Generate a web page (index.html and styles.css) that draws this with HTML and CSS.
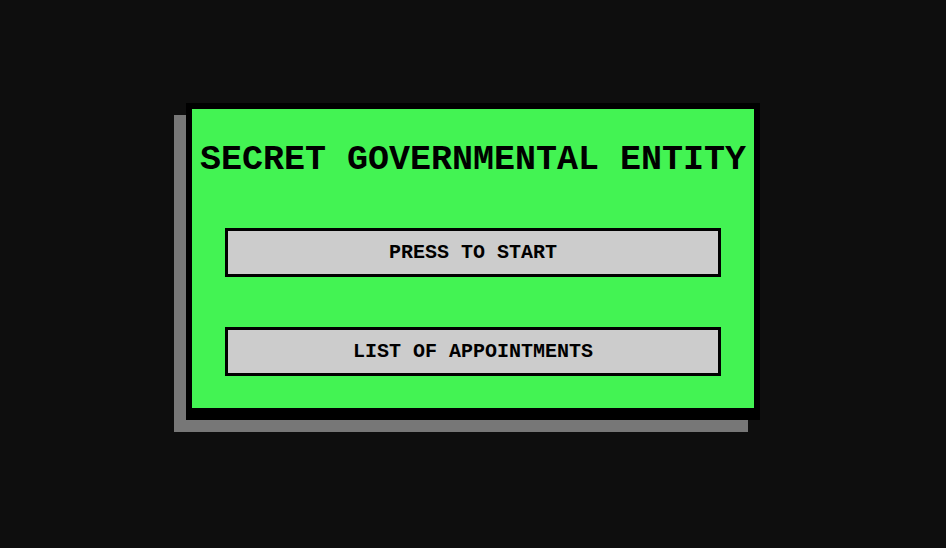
FILE: index.html
```html
<!DOCTYPE html>
<html>
<head>
<meta charset="utf-8">
<link rel="stylesheet" href="styles.css">
</head>
<body>
<main class="card">
  <h1 class="title">SECRET GOVERNMENTAL ENTITY</h1>
  <div class="actions">
    <button class="btn">PRESS TO START</button>
    <button class="btn">LIST OF APPOINTMENTS</button>
  </div>
</main>
</body>
</html>
```
FILE: styles.css
```css
html, body {
  margin: 0;
  padding: 0;
  background: #0e0e0e;
  height: 100%;
}
body {
  display: flex;
  justify-content: center;
  align-items: flex-start;
  padding-top: 103px;
  box-sizing: border-box;
  font-family: "Courier New", "Liberation Mono", monospace;
}
.card {
  width: 562px;
  height: 268px;
  background: #43f353;
  border: 6px solid #000;
  border-bottom-width: 12px;
  box-shadow: -12px 12px 0 #777777;
  display: flex;
  flex-direction: column;
  align-items: center;
  padding-top: 31px;
  box-sizing: content-box;
}
.title {
  margin: 0;
  font-size: 35px;
  line-height: 40px;
  font-weight: bold;
  color: #000;
  white-space: nowrap;
}
.actions {
  margin-top: 48px;
  display: flex;
  flex-direction: column;
  gap: 50px;
}
.btn {
  width: 496px;
  height: 49px;
  background: #cccccc;
  border: 3px solid #000;
  font-family: "Courier New", "Liberation Mono", monospace;
  font-weight: bold;
  font-size: 20px;
  color: #000;
  padding: 0;
  cursor: pointer;
}
```
